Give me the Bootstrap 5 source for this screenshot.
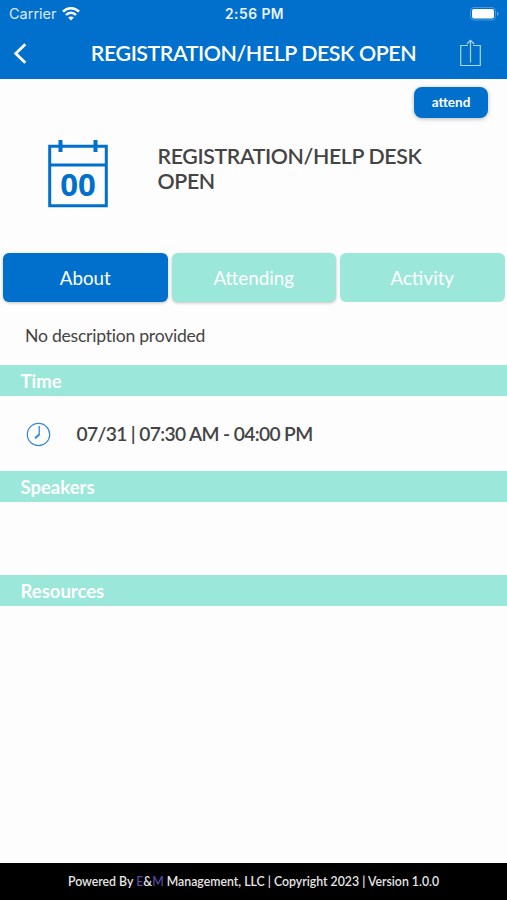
<!DOCTYPE html>
<html lang="en">
<head>
<meta charset="utf-8">
<meta name="viewport" content="width=device-width, initial-scale=1">
<title>Registration/Help Desk Open</title>
<link href="https://cdn.jsdelivr.net/npm/bootstrap@5.3.0/dist/css/bootstrap.min.css" rel="stylesheet">
<style>
  :root { --brand: #0070cc; --mint: #9be7d9; --ink: #444; }
  body { font-family: Lato, "Liberation Sans", sans-serif; font-variant-ligatures: none; background: #fdfdfd; color: var(--ink); }
  .app-head { background: var(--brand); height: 79px; }
  .status-line { height: 28px; font-family: Inter, sans-serif; line-height: 28px; padding: 0 7px 0 9px; }
  .status-line > * { flex: 1 1 0; }
  .status-carrier { opacity: .85; font-size: 14.5px; }
  .status-time { font-weight: 600; font-size: 13.8px; letter-spacing: .5px; opacity: .92; }
  .title-line { height: 50px; padding: 0 26px 0 13px; }
  .page-title { font-size: 21.4px; line-height: 50px; font-weight: 600; letter-spacing: -.45px; padding-left: 20px; }
  .btn-attend { --bs-btn-color: #fff; --bs-btn-bg: var(--brand); width: 74px; height: 31px; font-size: 13.5px; font-weight: 700; line-height: 31px; border: 0; border-radius: 8px; box-shadow: 0 1px 4px rgba(0,0,0,.28); margin: 8px 19px 0 0; }
  .hero { height: 134.5px; padding: 21px 48px 0; }
  .hero-title { font-size: 21.3px; line-height: 25px; font-weight: 600; letter-spacing: -.36px; margin: 5px 0 0 49.5px; width: 290px; }
  .tabs-line { padding: 0 2.5px 0 3px; gap: 4px; }
  .tab-btn { --bs-btn-color: #fff; flex: 1 1 0; height: 49px; font-size: 18.8px; line-height: 49px; border: 0; border-radius: 6px; background: var(--mint); }
  .tab-btn.is-on { background: var(--brand); }
  .tab-raised { box-shadow: 0 1px 3px rgba(0,0,0,.25); }
  .about-text { height: 63.5px; padding: 5px 25px 0; font-size: 17.6px; line-height: 58px; letter-spacing: -.25px; }
  .band { height: 31px; background: var(--mint); color: #fff; padding-left: 20.5px; font-size: 18.5px; line-height: 32px; font-weight: 700; }
  .time-line { height: 75px; padding: 1px 0 0 26px; font-size: 19.2px; font-weight: 600; letter-spacing: -.63px; gap: 25.5px; }
  .speakers-space { height: 73px; }
  .foot { height: 37px; background: #000; color: #e6e6e6; font-size: 12.3px; line-height: 38px; font-weight: 600; }
  .foot-brand { color: #5147a0; }
</style>
</head>
<body>
<div class="d-flex flex-column vh-100 overflow-hidden">
  <header class="app-head text-white flex-shrink-0">
    <div class="status-line d-flex align-items-center">
      <div class="d-flex align-items-center"><span class="status-carrier">Carrier</span>
        <svg class="ms-1" width="20" height="16" viewBox="0 0 20 16" fill="none" stroke="#fff" stroke-width="2.5"><path d="M2 5.7C6.4 1.1 13.6 1.1 18 5.7M5 9c2.8-2.9 7.2-2.9 10 0"/><path d="M7.2 11.6c1.6-1.6 4-1.6 5.6 0L10 14.6z" fill="#fff" stroke="none"/></svg>
      </div>
      <div class="status-time text-center">2:56 PM</div>
      <div class="d-flex justify-content-end">
        <svg width="30" height="14" viewBox="0 0 30 14"><rect x=".5" y=".5" width="25" height="12.5" rx="3.5" fill="none" stroke="#4a98db"/><rect x="2" y="2" width="22" height="9.5" rx="2" fill="#fff"/><path d="M27.2 4.5q2.6 2.2 0 4.5z" fill="#73b0e3"/></svg>
      </div>
    </div>
    <div class="title-line d-flex align-items-center justify-content-between">
      <svg width="14" height="21" viewBox="0 0 14 21" fill="none" stroke="#fff" stroke-width="2.8"><path d="M12.3 1.3 2.7 10.5l9.6 9.2"/></svg>
      <h1 class="page-title mb-0 text-nowrap">REGISTRATION/HELP DESK OPEN</h1>
      <svg width="21" height="28" viewBox="0 0 21 28" fill="none" stroke="#a9d5f6" stroke-width="1.2"><path d="M8 6.5H.7v20h19.6v-20H13M10.5 23.5v-22M6.8 5l3.7-3.6L14.2 5"/></svg>
    </div>
  </header>
  <main class="flex-grow-1">
    <div class="d-flex justify-content-end"><button class="btn btn-attend p-0">attend</button></div>
    <section class="hero d-flex align-items-start">
      <svg class="flex-shrink-0" width="60" height="69" viewBox="0 0 60 69" fill="none" stroke="#0070cc"><path d="M1.7 7.2h56.6v59.6H1.7zM1.7 26h56.6" stroke-width="3"/><path d="M12.5 1v12M47.5 1v12" stroke-width="4"/><text x="30" y="57" text-anchor="middle" font-family="Open Sans" font-size="31" font-weight="700" fill="#0070cc" stroke="none">00</text></svg>
      <h2 class="hero-title mb-0">REGISTRATION/HELP DESK OPEN</h2>
    </section>
    <nav class="tabs-line d-flex">
      <button class="btn tab-btn tab-raised is-on p-0">About</button>
      <button class="btn tab-btn tab-raised p-0">Attending</button>
      <button class="btn tab-btn p-0">Activity</button>
    </nav>
    <p class="about-text mb-0">No description provided</p>
    <h3 class="band mb-0">Time</h3>
    <div class="time-line d-flex align-items-center">
      <svg width="25" height="25" viewBox="0 0 25 25" fill="none" stroke="#3189d8"><circle cx="12.5" cy="12.5" r="11.2" stroke-width="1.2"/><path d="M13.2 4v9" stroke-width="1.3"/><path d="M13.3 12.6 9 16.3" stroke-width="2"/></svg>
      <span>07/31 | 07:30 AM - 04:00 PM</span>
    </div>
    <h3 class="band mb-0">Speakers</h3>
    <div class="speakers-space"></div>
    <h3 class="band mb-0">Resources</h3>
  </main>
  <footer class="foot text-center flex-shrink-0">Powered By <span class="foot-brand">E</span>&amp;<span class="foot-brand">M</span> Management, LLC | Copyright 2023 | Version 1.0.0</footer>
</div>
<script src="https://cdn.jsdelivr.net/npm/bootstrap@5.3.0/dist/js/bootstrap.bundle.min.js"></script>
</body>
</html>
